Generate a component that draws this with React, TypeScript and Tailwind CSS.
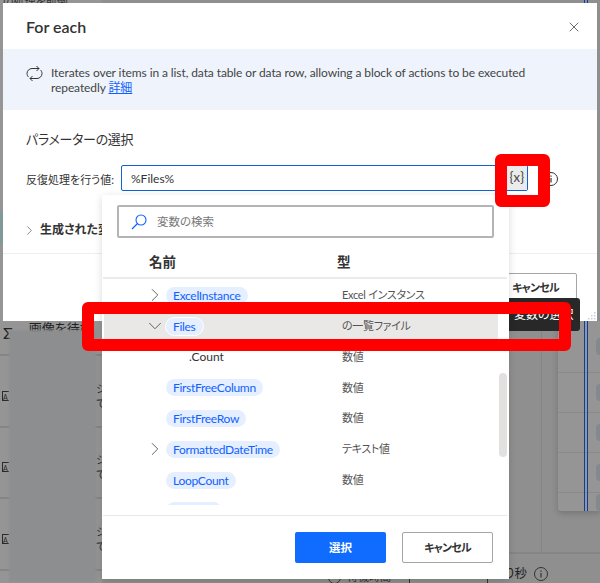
import { X, ChevronRight, ChevronDown } from "lucide-react";

function Info({ className = "" }: { className?: string }) {
  return (
    <svg width="16" height="16" viewBox="0 0 16 16" fill="none" className={className}>
      <circle cx="8" cy="8" r="6.5" stroke="#333" strokeWidth="1" />
      <path d="M8 7v4.5M8 4.5v1.2" stroke="#333" strokeWidth="1.2" />
    </svg>
  );
}

function LoopIcon() {
  return (
    <svg width="17" height="17" viewBox="0 0 17 17" fill="none" className="shrink-0">
      <path d="M2.5 12C1.5 11 1 9.8 1 8.5 1 5.5 3.5 3.5 6 3.5h7M10.5 1 13 3.5 10.5 6" stroke="#333" strokeWidth="1" />
      <path d="M14.5 5C15.5 6 16 7.2 16 8.5 16 11.5 13.5 13.5 11 13.5H4M6.5 11 4 13.5 6.5 16" stroke="#333" strokeWidth="1" />
    </svg>
  );
}

type Row = { name: string; type: string; chevron?: "right" | "down"; selected?: boolean; plain?: boolean };

const rows: Row[] = [
  { name: "ExcelInstance", type: "Excel インスタンス", chevron: "right" },
  { name: "Files", type: "の一覧ファイル", chevron: "down", selected: true },
  { name: ".Count", type: "数値", plain: true },
  { name: "FirstFreeColumn", type: "数値" },
  { name: "FirstFreeRow", type: "数値" },
  { name: "FormattedDateTime", type: "テキスト値", chevron: "right" },
  { name: "LoopCount", type: "数値" },
  { name: "", type: "", chevron: "right" },
];

function VarRow({ r }: { r: Row }) {
  return (
    <div className="flex items-center h-[30.8px] shrink-0 ml-[2px]">
      <div className={`flex items-center h-[25px] w-[394px] ${r.selected ? "bg-[#eae8e6]" : ""}`}>
        <div className="w-[62px] flex justify-end shrink-0">
          {r.chevron === "right" && <ChevronRight size={22} strokeWidth={0.9} className="text-[#444]" />}
          {r.chevron === "down" && <ChevronDown size={22} strokeWidth={0.9} className="text-[#444]" />}
        </div>
        <div className="w-[170px] shrink-0 flex">
          {r.plain ? (
            <span className="ml-[23px] text-[12px] text-[#333]">{r.name}</span>
          ) : (
            <span className={`h-[17px] rounded-full bg-[#e6efff] px-[7px] leading-[17px] text-[12px] tracking-[-0.3px] text-[#0f62fe] whitespace-nowrap ${r.selected ? "border border-white box-content -my-[1px] -ml-[1px]" : ""} ${r.name === "" ? "w-[56px]" : ""}`}>
              {r.name}
            </span>
          )}
        </div>
        <span className="ml-[6px] text-[11px] tracking-[-0.3px] text-[#555] whitespace-nowrap">{r.type}</span>
      </div>
    </div>
  );
}

function Dropdown() {
  return (
    <div className="absolute left-[102px] top-[195px] w-[407px] h-[384px] bg-white flex flex-col shadow-[0_2px_8px_rgba(0,0,0,0.15)]">
      <div className="mt-[10px] mx-[15px] h-[33px] border-2 border-[#b4b4b4] rounded-[2px] flex items-center pl-[12px] gap-[10px] shrink-0">
        <svg width="16" height="16" viewBox="0 0 16 16" fill="none">
          <circle cx="10" cy="6" r="5" stroke="#0f62fe" strokeWidth="1.1" />
          <path d="M6.5 9.5 1 15" stroke="#0f62fe" strokeWidth="1.2" />
        </svg>
        <span className="text-[11.5px] text-[#777]">変数の検索</span>
      </div>
      <div className="h-[41px] flex items-center border-b-2 border-[#ebebeb] shrink-0 text-[13.5px] font-semibold text-[#333] mr-[2px] ml-[1px] pt-[9px]">
        <span className="ml-[46px] w-[188px]">名前</span>
        <span>型</span>
      </div>
      <div className="relative h-[226px] overflow-hidden shrink-0 pt-[1px]">
        {rows.map((r, i) => (
          <VarRow key={i} r={r} />
        ))}
        <div className="absolute right-[2px] top-[94px] w-[8px] h-[84px] rounded-full bg-[#e2e1df]" />
      </div>
      <div className="flex-1 mt-[10px] border-t border-[#e8e8e8] flex justify-end items-start pt-[16px] pr-[14px] gap-[16px] mr-[2px] ml-[1px]">
        <button className="w-[91px] h-[31px] rounded-[2px] bg-[#0f6cff] text-white text-[11.5px] font-semibold pt-[1px]">選択</button>
        <button className="w-[91px] h-[31px] rounded-[2px] border border-[#a5a5a5] bg-white text-[#333] text-[11px] tracking-[-0.8px] font-semibold pt-[1px]">キャンセル</button>
      </div>
    </div>
  );
}

function Dialog() {
  return (
    <div className="absolute left-[3px] top-[3px] w-[594px] h-[318px] bg-white flex flex-col text-[#333]">
      <div className="h-[46px] shrink-0 flex items-center justify-between pl-[23px] pr-[15px] pt-[2px]">
        <span className="text-[16px] font-semibold">For each</span>
        <X size={16} strokeWidth={1} className="text-[#222]" />
      </div>
      <div className="h-[61px] shrink-0 bg-[#eff4fc] flex items-start pl-[23px] pt-[16px] gap-[8px]">
        <LoopIcon />
        <p className="text-[12px] tracking-[-0.1px] leading-[15px] w-[480px] text-[#444]">
          Iterates over items in a list, data table or data row, allowing a block of actions to be executed repeatedly{" "}
          <span className="text-[#0f62fe] underline">詳細</span>
        </p>
      </div>
      <div className="pl-[23px] pt-[20px] text-[13px] tracking-[-0.3px] h-[55px] shrink-0">パラメーターの選択</div>
      <div className="flex items-center pl-[23px] shrink-0">
        <span className="w-[95px] text-[11px] pt-[4px] whitespace-nowrap">反復処理を行う値:</span>
        <div className="w-[407px] h-[26px] border border-[#0f62d8] rounded-[2px] flex items-center justify-between pl-[9px]">
          <span className="text-[12px] pt-[2px]">%Files%</span>
          <span className="w-[20px] h-[24px] bg-[#ebebeb] flex items-center justify-center text-[13px] tracking-[0.4px] text-[#444]">{"{x}"}</span>
        </div>
        <Info className="ml-[15px] mt-[2px]" />
      </div>
      <div className="flex items-center pl-[19px] pt-[30px] gap-[3px] text-[12px] font-semibold whitespace-nowrap">
        <ChevronRight size={15} strokeWidth={1} className="text-[#444]" />
        <span>生成された変数</span>
      </div>
      <div className="mt-[14px] border-t border-[#eeeeee] flex justify-end pt-[19px] pr-[20px]">
        <button className="w-[83px] h-[31px] rounded-[2px] border border-[#a5a5a5] text-[11px] tracking-[-0.8px] font-semibold">キャンセル</button>
      </div>
      <svg width="10" height="10" viewBox="0 0 10 10" className="absolute right-[1px] bottom-[1px]">
        {[[8, 0], [8, 3], [8, 6], [5, 3], [5, 6], [2, 6]].map(([x, y]) => (
          <rect key={`${x}-${y}`} x={x} y={y + 2} width="1.5" height="1.5" fill="#c3cfe0" />
        ))}
      </svg>
    </div>
  );
}

function LeftRow() {
  return (
    <div className="h-[71.5px] border-b-2 border-[#858585] shrink-0 flex items-center pt-[10px] justify-between whitespace-nowrap">
      <span className="ml-[2px] w-[7px] h-[10px] border-l border-t border-b border-[#2a2a2a] text-[7px] leading-[10px] text-[#2a2a2a]">A</span>
      <span className="text-[11px] leading-[15px] text-[#333] w-[6px] overflow-hidden">ジ<br />て</span>
    </div>
  );
}

function Background() {
  return (
    <div className="flex h-full">
      <div className="w-[102px] shrink-0 flex flex-col bg-[#959595]">
        <div className="h-[3px] overflow-hidden pl-[3px] text-[11px] leading-[3px] text-[#333] whitespace-nowrap shrink-0">の処理を前倒</div>
        <div className="h-[208px] shrink-0" />
        <div className="h-[33px] w-[3px] bg-[#7f9a98] shrink-0" />
        <div className="h-[77px] shrink-0" />
        <div className="h-[35px] border-b-2 border-[#858585] flex items-start gap-[16px] pl-[3px] text-[#222] shrink-0">
          <span className="text-[16px] leading-[24px]">Σ</span>
          <span className="text-[13px] leading-[15px] whitespace-nowrap">画像を待機</span>
        </div>
        <LeftRow />
        <LeftRow />
        <LeftRow />
      </div>
      <div className="w-[407px] shrink-0 flex flex-col justify-end">
        <div className="h-[12px] flex items-start pl-[226px] text-[11px] leading-[12px] text-[#333] whitespace-nowrap">
          <span className="w-[13px] h-[13px] rounded-full border border-[#333] shrink-0" />
          <span className="ml-[6px] w-[62px]">待機時間</span>
          <span className="w-px h-[12px] bg-[#333]" />
          <ChevronDown size={12} className="ml-[62px] mt-[-2px]" />
          <span className="ml-[3px] w-px h-[12px] bg-[#333]" />
        </div>
      </div>
      <div className="flex-1 flex flex-col">
        <div className="mt-[321px] flex-1 flex flex-col">
          <div className="flex-1 flex">
            <div className="w-[33px] border-r border-[#858585]" />
            <div className="flex-1 ml-[16px] h-[190px] bg-[#959595] rounded-bl-[3px] shadow-[0_2px_6px_rgba(0,0,0,0.2)] flex flex-col">
              {[52, 40, 40, 40, 18].map((h, i) => (
                <div key={i} className="flex items-center justify-end border-b border-[#8a8a8a] last:border-0 shrink-0" style={{ height: h }}>
                  <div className="w-[4px] h-[17px] rounded-l-[6px] bg-[#84888f]" />
                </div>
              ))}
            </div>
          </div>
          <div className="h-[31px] shrink-0 border-t-2 border-[#858585] bg-[#8f8f8f] flex items-center text-[#222] text-[12.5px] pt-[11px]">
            <span className="whitespace-nowrap -ml-[5px]">り秒</span>
            <Info className="ml-[6px] -mt-[1px]" />
          </div>
        </div>
      </div>
    </div>
  );
}

function RedFrame({ className }: { className: string }) {
  return <div className={`absolute border-[12px] border-[#ff0000] rounded-[6px] ${className}`} />;
}

export default function App() {
  return (
    <div className="relative w-[600px] h-[583px] overflow-hidden bg-[#8f8f8f] font-['Lato','Noto_Sans_CJK_JP',sans-serif] [font-feature-settings:'palt']">
      <Background />
      <div className="absolute left-[584px] top-0 w-[4px] h-[511px] border-x border-[#0b3fa0]" />
      <div className="absolute left-[9px] top-[330px] w-[87px] h-[252px] bg-[#8d8e8f] blur-[1px]" />
      <Dialog />
      <div className="absolute left-[503px] top-[298px] w-[77px] h-[33px] rounded-[3px] bg-[#282828] text-white text-[12px] flex items-center pl-[11px] whitespace-nowrap">変数の選択</div>
      <Dropdown />
      <RedFrame className="left-[495px] top-[154px] w-[55px] h-[53px]" />
      <RedFrame className="left-[82px] top-[302px] w-[489px] h-[49px]" />
    </div>
  );
}
